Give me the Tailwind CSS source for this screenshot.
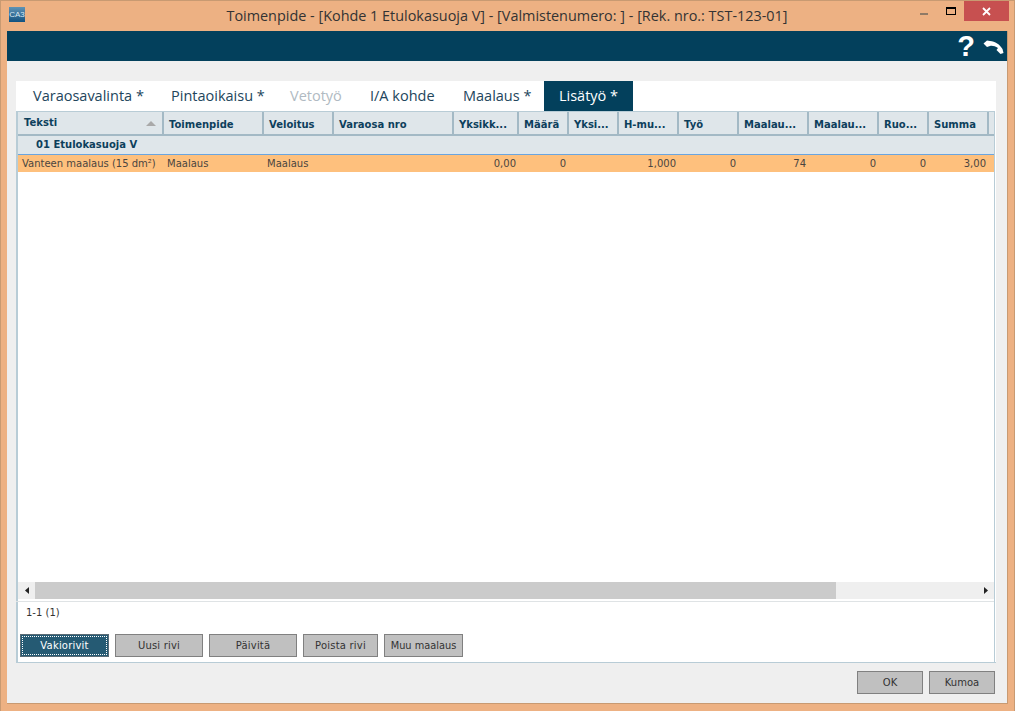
<!DOCTYPE html>
<html><head><meta charset="utf-8"><script src="https://cdn.jsdelivr.net/npm/@tailwindcss/browser@4"></script></head>
<body class="m-0 overflow-hidden">
<div class="w-[1015px] h-[711px] bg-[#edb183] border border-[#c89a72] border-b-0 flex flex-col font-['Open_Sans',sans-serif]">
  <div class="h-[30px] flex items-start shrink-0">
    <div class="flex-1 pl-[8px] pt-[6px]">
      <div class="w-[16px] h-[15px] bg-gradient-to-b from-[#5f93b5] to-[#0f5280] text-[#dbe9f2] text-[8px] leading-[16px] text-center font-['Liberation_Sans',sans-serif]">CA3</div>
    </div>
    <div class="text-[14.42px] leading-[30px] text-[#333] whitespace-nowrap pr-[4px]">Toimenpide - [Kohde 1 Etulokasuoja V] - [Valmistenumero: ] - [Rek. nro.: TST-123-01]</div>
    <div class="flex-1 flex justify-end items-start pr-[5px]">
      <div class="w-[8px] h-[2px] bg-[#8f7a66] mt-[12px] mr-[18px]"></div>
      <div class="w-[10px] h-[8px] border border-black border-t-2 mt-[6px] mr-[8px]"></div>
      <div class="w-[45px] h-[20px] bg-[#c75050] text-white text-center">
        <svg class="mx-auto mt-[6px]" width="9" height="9" viewBox="0 0 9 9"><path d="M1 1l7 7M8 1l-7 7" stroke="#fff" stroke-width="1.8"/></svg>
      </div>
    </div>
  </div>
  <div class="ml-[6px] mr-[6px] h-[673px] bg-[#efefef] flex flex-col border-r border-b border-[#c89a72]">
    <div class="h-[30px] bg-[#03405c] flex justify-end items-center shrink-0">
      <span class="text-white text-[29px] leading-[30px] font-bold font-['Liberation_Sans',sans-serif] mr-[8px] mt-[-1px]">?</span>
      <svg class="mr-[3px] mt-[2px]" width="21" height="15" viewBox="0 0 21 15"><path d="M0.5 3.5 L4 0.5 L7 1 C12 1.5 17 4.5 19.5 9 L20.5 13 L17.5 14 L13.5 10 L15 8 C12 6 9 5.5 7 6 L4 7 Z" fill="#fff"/></svg>
    </div>
    <div class="mt-[20px] mx-[9px] w-[980px] h-[582px] bg-white flex flex-col border-b border-[#b8ccd6]">
      <div class="h-[30px] flex text-[14.5px] leading-[30px] text-[#22455c] shrink-0 whitespace-nowrap">
        <div class="pl-[17px] w-[155px]">Varaosavalinta *</div>
        <div class="w-[119px]">Pintaoikaisu *</div>
        <div class="w-[80px] text-[#b0bac2]">Vetotyö</div>
        <div class="w-[93px]">I/A kohde</div>
        <div class="w-[81px]">Maalaus *</div>
        <div class="w-[89px] bg-[#03405c] text-white text-center">Lisätyö *</div>
      </div>
      <div class="mr-[1px] flex-1 border-l-2 border-r border-t border-[#b8ccd6] flex flex-col min-h-0 font-['DejaVu_Sans',sans-serif] text-[10px]">
        <div class="h-[24px] flex font-bold text-[#0d3f5c] bg-[#dfe6ea] shrink-0 border-b-2 border-[#a3b9c5] whitespace-nowrap">
          <div class="w-[146px] pl-[6px] pr-[6px] leading-[26px] border-r-2 border-[#a3b9c5] flex justify-between items-center">Teksti<svg width="10" height="5" viewBox="0 0 10 5"><path d="M0 5L5 0l5 5z" fill="#a9a9a9"/></svg></div>
          <div class="w-[100px] pl-[5px] leading-[26px] border-r-2 border-[#a3b9c5]">Toimenpide</div>
          <div class="w-[70px] pl-[5px] leading-[26px] border-r-2 border-[#a3b9c5]">Veloitus</div>
          <div class="w-[120px] pl-[5px] leading-[26px] border-r-2 border-[#a3b9c5]">Varaosa nro</div>
          <div class="w-[65px] pl-[5px] leading-[26px] border-r-2 border-[#a3b9c5]">Yksikk...</div>
          <div class="w-[50px] pl-[5px] leading-[26px] border-r-2 border-[#a3b9c5]">Määrä</div>
          <div class="w-[50px] pl-[5px] leading-[26px] border-r-2 border-[#a3b9c5]">Yksi...</div>
          <div class="w-[60px] pl-[5px] leading-[26px] border-r-2 border-[#a3b9c5]">H-mu...</div>
          <div class="w-[60px] pl-[5px] leading-[26px] border-r-2 border-[#a3b9c5]">Työ</div>
          <div class="w-[70px] pl-[5px] leading-[26px] border-r-2 border-[#a3b9c5]">Maalau...</div>
          <div class="w-[70px] pl-[5px] leading-[26px] border-r-2 border-[#a3b9c5]">Maalau...</div>
          <div class="w-[50px] pl-[5px] leading-[26px] border-r-2 border-[#a3b9c5]">Ruo...</div>
          <div class="w-[60px] pl-[5px] leading-[26px] border-r-2 border-[#a3b9c5]">Summa</div>
        </div>
        <div class="h-[19px] bg-[#dfe6ea] pl-[18px] font-bold text-[#0d3f5c] leading-[18px] shrink-0 border-b border-[#6aa5e0]">01 Etulokasuoja V</div>
        <div class="h-[17px] bg-[#fec07d] flex leading-[18px] text-[#4a4540] shrink-0 whitespace-nowrap">
          <div class="w-[146px] pl-[4px]">Vanteen maalaus (15 dm²)</div>
          <div class="w-[100px] pl-[3px]">Maalaus</div>
          <div class="w-[70px] pl-[3px]">Maalaus</div>
          <div class="w-[120px]"></div>
          <div class="w-[65px] text-right pr-[3px]">0,00</div>
          <div class="w-[50px] text-right pr-[3px]">0</div>
          <div class="w-[50px]"></div>
          <div class="w-[60px] text-right pr-[3px]">1,000</div>
          <div class="w-[60px] text-right pr-[3px]">0</div>
          <div class="w-[70px] text-right pr-[3px]">74</div>
          <div class="w-[70px] text-right pr-[3px]">0</div>
          <div class="w-[50px] text-right pr-[3px]">0</div>
          <div class="w-[60px] text-right pr-[3px]">3,00</div>
        </div>
        <div class="flex-1 min-h-0"></div>
        <div class="h-[17px] bg-[#efefef] flex shrink-0 items-center">
          <div class="w-[17px] flex justify-center"><svg width="4" height="7" viewBox="0 0 4 7"><path d="M4 0L0 3.5 4 7z" fill="#222"/></svg></div>
          <div class="w-[801px] h-[17px] bg-[#cbcbcb]"></div>
          <div class="flex-1 flex justify-end pr-[6px]"><svg width="4" height="7" viewBox="0 0 4 7"><path d="M0 0l4 3.5L0 7z" fill="#222"/></svg></div>
        </div>
        <div class="h-[2px] shrink-0"></div>
        <div class="h-[61px] shrink-0 border-t border-[#dfe3e5] ml-[-2px] pl-[4px] flex flex-col">
          <div class="text-[#333] leading-[20px] mt-[1px] h-[31px] pl-[6px]">1-1 (1)</div>
          <div class="flex gap-[6px] text-[10px] leading-[21px] text-center tracking-[0.2px]">
            <div class="w-[89px] h-[23px] bg-[#255a73] border border-[#5b6b75] text-white p-px"><div class="border border-dotted border-white h-[19px] leading-[17px]">Vakiorivit</div></div>
            <div class="w-[88px] h-[23px] bg-[#c0c0c0] border border-[#808080] text-[#333]">Uusi rivi</div>
            <div class="w-[88px] h-[23px] bg-[#c0c0c0] border border-[#808080] text-[#333]">Päivitä</div>
            <div class="w-[75px] h-[23px] bg-[#c0c0c0] border border-[#808080] text-[#333]">Poista rivi</div>
            <div class="w-[79px] h-[23px] bg-[#c0c0c0] border border-[#808080] text-[#333] text-[9.8px] tracking-normal">Muu maalaus</div>
          </div>
        </div>
      </div>
    </div>
    <div class="mt-[8px] flex justify-end gap-[6px] pr-[12px] font-['DejaVu_Sans',sans-serif] text-[10px] leading-[21px] text-center text-[#333]">
      <div class="w-[66px] h-[23px] bg-[#c0c0c0] border border-[#808080]">OK</div>
      <div class="w-[66px] h-[23px] bg-[#c0c0c0] border border-[#808080]">Kumoa</div>
    </div>
  </div>
</div>
</body></html>
